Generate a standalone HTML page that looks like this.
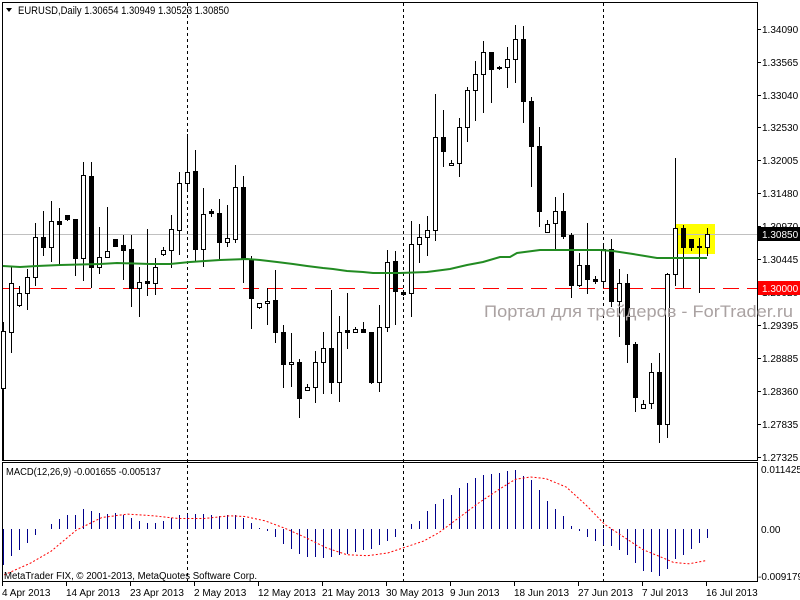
<!DOCTYPE html>
<html><head><meta charset="utf-8">
<style>
html,body{margin:0;padding:0;background:#fff;width:800px;height:600px;overflow:hidden}
svg{display:block;font-family:"Liberation Sans","DejaVu Sans",sans-serif}
</style></head><body>
<svg id="s" width="800" height="600" xmlns="http://www.w3.org/2000/svg">
<rect width="800" height="600" fill="#fff"/>
<rect x="2.5" y="2.5" width="755" height="458" fill="none" stroke="#000"/>
<rect x="2.5" y="462.5" width="755" height="119" fill="none" stroke="#000"/>
<g stroke="#000" stroke-dasharray="3,3">
<line x1="187.5" y1="3" x2="187.5" y2="582"/>
<line x1="403.5" y1="3" x2="403.5" y2="582"/>
<line x1="603.5" y1="3" x2="603.5" y2="582"/>
</g>
<rect x="675" y="224" width="40" height="30" fill="#ffff00"/>
<line x1="3" y1="234.5" x2="757" y2="234.5" stroke="#c0c0c0"/>
<line x1="3" y1="288.5" x2="757" y2="288.5" stroke="#ff0000" stroke-dasharray="16,8"/>
<g id="cand"></g>
<polyline fill="none" stroke="#228b22" stroke-width="2" points="3,266 20,267 37,266 60,265 100,264 117,263 150,264 170,264 190,262 220,260 247,259 260,260 277,262 293,264 307,266 323,268 333,269 347,271 363,272 373,273 400,273 427,272 450,269 467,265 483,262 500,257 510,257 517,253 540,250 600,250 613,251 633,254 657,258 707,258"/>
<g id="macd"></g>
<text x="484" y="317" font-size="17" fill="#aaa2a2" textLength="309" lengthAdjust="spacingAndGlyphs">Портал для трейдеров - ForTrader.ru</text>
<path d="M6,8 L12,8 L9,12 Z" fill="#000"/>
<text x="18" y="14" font-size="11" fill="#000" textLength="211" lengthAdjust="spacingAndGlyphs">EURUSD,Daily  1.30654 1.30949 1.30523 1.30850</text>
<g font-size="10" fill="#000" id="pax">
<text x="762" y="33">1.34090</text>
<text x="762" y="66">1.33565</text>
<text x="762" y="99">1.33040</text>
<text x="762" y="131">1.32530</text>
<text x="762" y="164">1.32005</text>
<text x="762" y="197">1.31480</text>
<text x="762" y="230">1.30970</text>
<text x="762" y="263">1.30445</text>
<text x="762" y="296">1.29920</text>
<text x="762" y="329">1.29395</text>
<text x="762" y="362">1.28885</text>
<text x="762" y="395">1.28360</text>
<text x="762" y="428">1.27835</text>
<text x="762" y="461">1.27325</text>
</g>
<g stroke="#000">
<line x1="757" y1="29.5" x2="761" y2="29.5"/><line x1="757" y1="62.5" x2="761" y2="62.5"/>
<line x1="757" y1="95.5" x2="761" y2="95.5"/><line x1="757" y1="127.5" x2="761" y2="127.5"/>
<line x1="757" y1="160.5" x2="761" y2="160.5"/><line x1="757" y1="193.5" x2="761" y2="193.5"/>
<line x1="757" y1="226.5" x2="761" y2="226.5"/><line x1="757" y1="259.5" x2="761" y2="259.5"/>
<line x1="757" y1="325.5" x2="761" y2="325.5"/><line x1="757" y1="358.5" x2="761" y2="358.5"/>
<line x1="757" y1="391.5" x2="761" y2="391.5"/><line x1="757" y1="424.5" x2="761" y2="424.5"/>
<line x1="757" y1="457.5" x2="761" y2="457.5"/>
</g>
<rect x="758" y="227" width="42" height="14" fill="#000"/>
<text x="762" y="238" font-size="10" fill="#fff">1.30850</text>
<rect x="758" y="281" width="42" height="14" fill="#ff0000"/>
<text x="762" y="292" font-size="10" fill="#fff">1.30000</text>
<text x="6" y="475" font-size="10" fill="#000" textLength="155" lengthAdjust="spacingAndGlyphs">MACD(12,26,9) -0.001655 -0.005137</text>
<text x="4" y="579" font-size="10" fill="#000" textLength="253" lengthAdjust="spacingAndGlyphs">MetaTrader FIX, © 2001-2013, MetaQuotes Software Corp.</text>
<g font-size="10" fill="#000">
<text x="761" y="473">0.011425</text>
<text x="761" y="533">0.00</text>
<text x="758" y="580">-0.009179</text>
</g>
<g font-size="10" fill="#000">
<text x="2" y="596">4 Apr 2013</text>
<text x="66" y="596">14 Apr 2013</text>
<text x="130" y="596">23 Apr 2013</text>
<text x="194" y="596">2 May 2013</text>
<text x="258" y="596">12 May 2013</text>
<text x="322" y="596">21 May 2013</text>
<text x="386" y="596">30 May 2013</text>
<text x="450" y="596">9 Jun 2013</text>
<text x="514" y="596">18 Jun 2013</text>
<text x="578" y="596">27 Jun 2013</text>
<text x="642" y="596">7 Jul 2013</text>
<text x="706" y="596">16 Jul 2013</text>
</g>
<g stroke="#000" id="dt"></g>
</svg>
<script>
var NS="http://www.w3.org/2000/svg";
function el(p,t,a){var e=document.createElementNS(NS,t);for(var k in a)e.setAttribute(k,a[k]);p.appendChild(e);return e;}
var C=[[331,388,322,460,0],[283,332,267,353,0],[293,305,286,307,0],[277,293,269,310,0],[237,277,223,286,0],[237,247,211,256,1],[221,247,201,262,0],[221,224,208,265,1],[215,219,215,221,1],[219,258,219,276,1],
[175,258,162,281,0],[176,267,162,288,1],[257,267,227,274,0],[251,257,207,257,0],[239,246,239,247,1],[245,250,235,280,1],[249,288,235,307,1],[282,288,267,317,0],[281,283,229,296,1],[267,283,258,295,0],
[250,254,247,256,0],[229,250,215,268,0],[183,230,172,255,0],[172,183,134,191,0],[171,249,150,262,1],[214,249,188,267,0],[211,213,209,217,1],[213,242,199,259,1],[238,242,205,247,0],[187,239,165,243,0],
[187,259,176,283,1],[260,298,256,329,1],[303,307,303,309,0],[301,303,288,325,0],[300,332,270,343,1],[332,364,325,388,1],[362,364,333,387,0],[362,398,359,418,1],[387,390,384,391,0],[362,387,351,403,0],
[348,362,332,394,0],[348,382,290,394,1],[332,382,316,402,0],[330,332,293,349,1],[329,332,327,332,0],[329,332,322,333,1],[332,382,332,384,1],[327,382,305,392,0],[262,327,250,332,0],[261,291,251,325,1],
[292,294,290,296,1],[244,293,221,317,0],[237,244,224,263,0],[230,237,216,256,0],[137,230,94,241,0],[137,151,110,167,1],[163,165,160,166,0],[127,163,118,177,0],[90,127,87,142,0],[74,90,61,121,0],
[52,74,41,113,0],[52,69,52,103,1],[67,68,66,70,1],[59,67,47,88,0],[39,59,25,83,0],[39,101,26,123,1],[101,146,97,187,1],[146,211,127,227,1],[224,232,220,233,0],[211,223,197,251,0],
[211,236,193,239,1],[235,285,233,298,1],[265,285,253,287,0],[265,279,223,294,1],[279,281,276,284,1],[249,281,243,287,0],[249,301,239,307,1],[283,301,269,337,0],[283,344,274,363,1],[344,397,342,412,1],
[404,408,400,409,0],[372,403,363,409,0],[372,424,353,443,1],[274,424,273,438,0],[228,274,158,286,0],[228,247,225,288,1],[239,247,239,251,1],[246,247,238,293,1],[234,247,228,256,0]];
var g=document.getElementById("cand");
C.forEach(function(c,i){var x=3.5+8*i;
el(g,"line",{x1:x,y1:c[2],x2:x,y2:c[3],stroke:"#000"});
var h=Math.max(c[1]-c[0],1);
el(g,"rect",{x:x-2,y:c[0]+0.5,width:4,height:h,fill:c[4]?"#000":"#fff",stroke:"#000"});});
var H=[36,27,21,14,6,0,-5,-10,-14,-14,-20,-18,-16,-15,-16,-14,-11,-8,-6,-6,-8,-11,-14,-15,-15,-15,-14,-13,-14,-14,-11,-6,-1,2,8,15,20,25,28,28,29,28,26,25,23,21,20,16,12,8,0,-5,-8,-18,-25,-30,-34,-41,-46,-51,-54,-55,-56,-58,-59,-53,-49,-39,-28,-20,-13,-3,2,8,12,16,17,21,26,34,42,43,47,40,30,26,20,14,9];
var m=document.getElementById("macd");
H.forEach(function(v,i){if(v==0)return;var x=3.5+8*i;el(m,"line",{x1:x,y1:529,x2:x,y2:529+v,stroke:"#00008b"});});
var S=[[8,355],[60,320],[100,285],[150,222],[200,185],[250,175],[300,180],[350,188],[400,188],[450,180],[480,182],[520,195],[560,218],[600,245],[640,275],[680,295],[720,298],[760,290],[790,275],[830,255],[860,230],[900,185],[940,140],[980,100],[1010,72],[1040,65],[1070,70],[1110,95],[1150,150],[1185,205],[1220,240],[1260,280],[1300,305],[1320,318],[1350,322],[1386,312]];
el(m,"polyline",{points:S.map(function(p){return (p[0]/1.96).toFixed(1)+","+(455+p[1]/2.96).toFixed(1)}).join(" "),fill:"none",stroke:"#ff0000","stroke-dasharray":"2,2"});
var d=document.getElementById("dt");
[2,66,130,194,258,322,386,450,514,578,642,706].forEach(function(x){el(d,"line",{x1:x+0.5,y1:582,x2:x+0.5,y2:586});});
</script>
</body></html>
